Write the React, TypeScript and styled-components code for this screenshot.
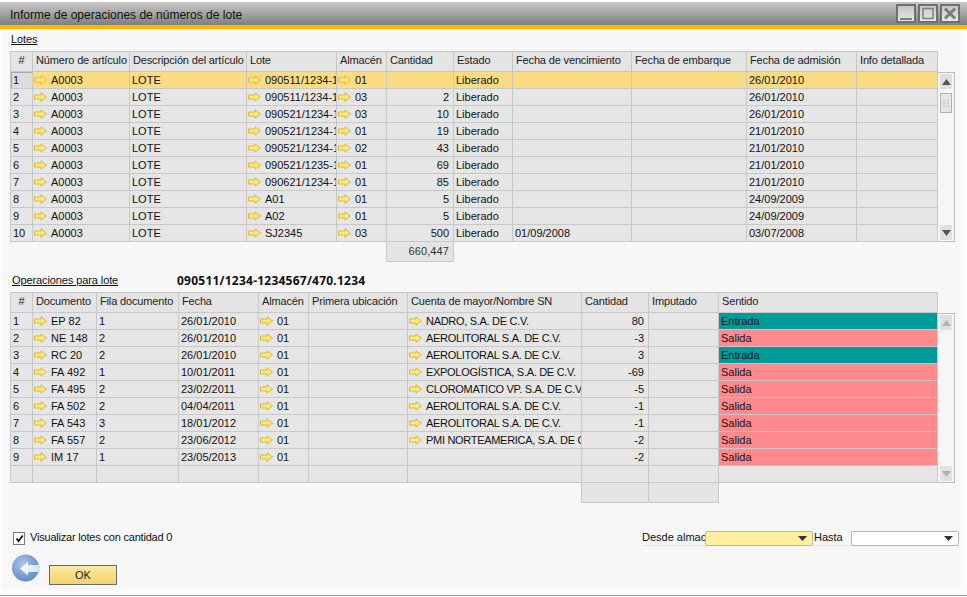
import React from 'react'
import styled, { createGlobalStyle } from 'styled-components'

const GlobalStyle = createGlobalStyle`
  html, body {
    margin: 0;
    padding: 0;
    background: #fbfbfb;
    overflow: hidden;
  }
  * {
    box-sizing: border-box;
  }
`

const Window = styled.div`
  width: 967px;
  height: 597px;
  display: flex;
  flex-direction: column;
  padding-top: 2px;
  font-family: 'Liberation Sans', Arial, sans-serif;
  font-size: 11px;
  color: #111;
  background: #fbfbfb;
`

const TitleBar = styled.div`
  height: 23px;
  flex: none;
  display: flex;
  align-items: center;
  justify-content: space-between;
  padding: 0 7px 0 10px;
  background: linear-gradient(#c9c9c9, #7e7e7e);
  font-size: 12px;
`

const TitleText = styled.span`
  padding-top: 2px;
`

const WindowButtons = styled.div`
  display: flex;
  gap: 2px;
  align-self: flex-start;
  margin-top: 2px;
`

const WindowButton = styled.div`
  width: 20px;
  height: 19px;
  border: 2px solid #707070;
  background: linear-gradient(#c6c6c6, #e8e8e8);
  display: flex;
  align-items: center;
  justify-content: center;
`

const Accent = styled.div`
  height: 4px;
  flex: none;
  background: #fbb800;
`

const Body = styled.div`
  flex: 1;
  margin: 0 6px 5px 2px;
  padding: 0 0 0 8px;
  background: #f7f7f7;
  display: flex;
  flex-direction: column;
`

const BottomEdge = styled.div`
  height: 1px;
  flex: none;
  margin-bottom: 1px;
  background: #9c9c9c;
`

const SectionHead = styled.div<{ $top: number }>`
  display: flex;
  height: 14px;
  margin-top: ${p => p.$top}px;
  margin-bottom: 5px;
  align-items: center;
`

const SectionLabel = styled.span<{ $width?: number; $indent: number }>`
  text-decoration: underline;
  letter-spacing: -0.1px;
  padding-left: ${p => p.$indent}px;
  ${p => (p.$width ? `width: ${p.$width}px;` : '')}
  flex: none;
`

const BatchId = styled.span`
  font-family: 'Noto Sans', 'Liberation Sans', sans-serif;
  font-size: 12px;
  font-weight: 700;
  letter-spacing: 0.23px;
`

const GridWrap = styled.div`
  width: 945px;
`

const HeaderRow = styled.div<{ $cols: string }>`
  display: grid;
  grid-template-columns: ${p => p.$cols};
  width: 928px;
  height: 21px;
  border-top: 1px solid #c8c8c8;
  border-left: 1px solid #c8c8c8;
  background: #e4e4e4;
`

const HeaderCell = styled.div<{ $center?: boolean }>`
  padding: 0 3px;
  line-height: 16px;
  letter-spacing: -0.15px;
  color: #222;
  white-space: nowrap;
  overflow: hidden;
  border-right: 1px solid #c8c8c8;
  border-bottom: 1px solid #c8c8c8;
  text-align: ${p => (p.$center ? 'center' : 'left')};
`

const BodyWrap = styled.div`
  display: flex;
`

const Rows = styled.div`
  width: 928px;
  flex: none;
`

const Row = styled.div<{ $cols: string }>`
  display: grid;
  grid-template-columns: ${p => p.$cols};
  height: 17px;
  border-left: 1px solid #c8c8c8;
`

const Cell = styled.div<{ $right?: boolean; $caps?: boolean; $tone?: 'sel' | 'in' | 'out' | 'rowsel' }>`
  padding: 0 ${p => (p.$right ? 4 : 0)}px 0 2px;
  line-height: 16px;
  ${p => (p.$caps ? 'letter-spacing: -0.3px;' : '')}
  white-space: nowrap;
  overflow: hidden;
  display: flex;
  align-items: center;
  gap: 4px;
  justify-content: ${p => (p.$right ? 'flex-end' : 'flex-start')};
  border-right: 1px solid #c8c8c8;
  border-bottom: 1px solid #c8c8c8;
  background: ${p =>
    p.$tone === 'sel'
      ? '#fcdc82'
      : p.$tone === 'in'
        ? '#009b9b'
        : p.$tone === 'out'
          ? '#ff8a8e'
          : p.$tone === 'rowsel'
            ? '#dcdcdc'
            : '#e6e6e6'};
  ${p => (p.$tone === 'rowsel' ? 'box-shadow: inset 1px 1px #a8a8a8;' : '')}
`

const ScrollBar = styled.div`
  width: 17px;
  flex: none;
  border: 1px solid #bdbdbd;
  border-left: none;
  background: #f6f6f6;
  display: flex;
  flex-direction: column;
  justify-content: space-between;
  padding: 1px 2px 1px 2px;
`

const ScrollTrack = styled.div`
  display: flex;
  flex-direction: column;
  gap: 4px;
`

const ScrollBtn = styled.div<{ $muted?: boolean }>`
  height: 15px;
  background: #e0e0e0;
  display: flex;
  align-items: center;
  justify-content: center;
  color: ${p => (p.$muted ? '#b0b0b0' : '#555')};
`

const ScrollThumb = styled.div`
  height: 20px;
  background: #e6e6e6;
  border: 1px solid #b2b2b2;
  display: flex;
  align-items: center;
  justify-content: center;
`

const TotalRow = styled.div<{ $left: number; $cols: string }>`
  display: grid;
  grid-template-columns: ${p => p.$cols};
  margin-left: ${p => p.$left}px;
  width: fit-content;
  height: 20px;
`

const TotalCell = styled.div`
  background: #e4e4e4;
  border: 1px solid #c8c8c8;
  border-top: none;
  margin-left: -1px;
  padding: 0 4px;
  line-height: 19px;
  text-align: right;
  color: #333;
  letter-spacing: 0.1px;
`

const Filters = styled.div`
  display: flex;
  align-items: flex-start;
  justify-content: space-between;
  height: 15px;
  margin-top: 28px;
  width: 949px;
  padding-left: 3px;
`

const CheckLabel = styled.label`
  display: flex;
  align-items: flex-start;
  gap: 5px;
  line-height: 13px;
  letter-spacing: -0.2px;
`

const CheckBox = styled.span`
  width: 12px;
  height: 13px;
  margin-top: 1px;
  border: 1px solid #7a7a7a;
  background: #fff;
  display: flex;
  align-items: center;
  justify-content: center;
`

const RangeFields = styled.div`
  display: flex;
  align-items: center;
`

const FieldLabel = styled.span<{ $width: number; $indent?: number }>`
  width: ${p => p.$width}px;
  height: 15px;
  padding-left: ${p => p.$indent ?? 0}px;
  line-height: 13px;
  overflow: hidden;
  white-space: nowrap;
  border-bottom: 1px solid #e2e6ee;
  flex: none;
`

const Combo = styled.div<{ $fill: string }>`
  width: 108px;
  height: 15px;
  flex: none;
  background: ${p => p.$fill};
  border: 1px solid #b4b4b4;
  border-radius: 2px;
  display: flex;
  align-items: center;
  justify-content: flex-end;
  padding-right: 2px;
`

const Actions = styled.div`
  display: flex;
  align-items: flex-start;
  gap: 9px;
  margin-top: 8px;
  padding-left: 2px;
`

const OkButton = styled.button`
  width: 68px;
  height: 20px;
  padding: 0;
  margin-top: 11px;
  border: 1px solid #6a6a6a;
  background: linear-gradient(#fbe9a5, #f5d264);
  font: inherit;
  color: #222;
`

const lotCols = '22px 97px 117px 90px 50px 67px 59px 119px 115px 110px 81px'
const opCols = '22px 64px 82px 80px 50px 99px 174px 67px 70px 219px'

const lotHeads = [
  '#',
  'Número de artículo',
  'Descripción del artículo',
  'Lote',
  'Almacén',
  'Cantidad',
  'Estado',
  'Fecha de vencimiento',
  'Fecha de embarque',
  'Fecha de admisión',
  'Info detallada',
]

const opHeads = [
  '#',
  'Documento',
  'Fila documento',
  'Fecha',
  'Almacén',
  'Primera ubicación',
  'Cuenta de mayor/Nombre SN',
  'Cantidad',
  'Imputado',
  'Sentido',
]

const lots = [
  ['090511/1234-1234567/470.1234', '01', '', '', '26/01/2010'],
  ['090511/1234-1234567/470.1235', '03', '2', '', '26/01/2010'],
  ['090521/1234-1234567/470.1236', '03', '10', '', '26/01/2010'],
  ['090521/1234-1234567/470.1237', '01', '19', '', '21/01/2010'],
  ['090521/1234-1234567/470.1238', '02', '43', '', '21/01/2010'],
  ['090521/1235-1234567/470.1239', '01', '69', '', '21/01/2010'],
  ['090621/1234-1234567/470.1240', '01', '85', '', '21/01/2010'],
  ['A01', '01', '5', '', '24/09/2009'],
  ['A02', '01', '5', '', '24/09/2009'],
  ['SJ2345', '03', '500', '01/09/2008', '03/07/2008'],
]

const ops = [
  ['EP 82', '1', '26/01/2010', 'NADRO, S.A. DE C.V.', '80', 'Entrada'],
  ['NE 148', '2', '26/01/2010', 'AEROLITORAL S.A. DE C.V.', '-3', 'Salida'],
  ['RC 20', '2', '26/01/2010', 'AEROLITORAL S.A. DE C.V.', '3', 'Entrada'],
  ['FA 492', '1', '10/01/2011', 'EXPOLOGÍSTICA, S.A. DE C.V.', '-69', 'Salida'],
  ['FA 495', '2', '23/02/2011', 'CLOROMATICO VP. S.A. DE C.V.', '-5', 'Salida'],
  ['FA 502', '2', '04/04/2011', 'AEROLITORAL S.A. DE C.V.', '-1', 'Salida'],
  ['FA 543', '3', '18/01/2012', 'AEROLITORAL S.A. DE C.V.', '-1', 'Salida'],
  ['FA 557', '2', '23/06/2012', 'PMI NORTEAMERICA, S.A. DE C.V.', '-2', 'Salida'],
  ['IM 17', '1', '23/05/2013', '', '-2', 'Salida'],
]

const ArrowIcon = styled.svg`
  flex: none;
  margin-left: -1px;
`

function LinkArrow() {
  return (
    <ArrowIcon width="13" height="10" viewBox="0 0 13 10">
      <path d="M.5 3H7V.8L12.4 5 7 9.2V7H.5Z" fill="#fdea70" stroke="#d9b64a" strokeWidth="1" />
    </ArrowIcon>
  )
}

function Triangle({ down }: { down?: boolean }) {
  return (
    <svg width="9" height="6" viewBox="0 0 9 6">
      <path d={down ? 'M0 0H9L4.5 6Z' : 'M0 6H9L4.5 0Z'} fill="currentColor" />
    </svg>
  )
}

function Scroller({ muted }: { muted?: boolean }) {
  return (
    <ScrollBar>
      <ScrollTrack>
        <ScrollBtn $muted={muted}>
          <Triangle />
        </ScrollBtn>
        {!muted && (
          <ScrollThumb>
            <svg width="6" height="8" viewBox="0 0 6 8">
              <path d="M0 0h2v2H0zM4 0h2v2H4zM0 3h2v2H0zM4 3h2v2H4zM0 6h2v2H0zM4 6h2v2H4z" fill="#cfcfcf" />
            </svg>
          </ScrollThumb>
        )}
      </ScrollTrack>
      <ScrollBtn $muted={muted}>
        <Triangle down />
      </ScrollBtn>
    </ScrollBar>
  )
}

function ComboArrow() {
  return (
    <svg width="9" height="5" viewBox="0 0 9 5" style={{ marginRight: 3 }}>
      <path d="M0 0H9L4.5 5Z" fill="#333" />
    </svg>
  )
}

function BackIcon() {
  return (
    <svg width="28" height="28" viewBox="0 0 28 28">
      <defs>
        <radialGradient id="backDisc" cx="0.4" cy="0.35" r="0.75">
          <stop offset="0" stopColor="#a9c4e8" />
          <stop offset="1" stopColor="#5786c0" />
        </radialGradient>
        <linearGradient id="backArrow" x1="0" y1="0" x2="1" y2="0">
          <stop offset="0" stopColor="#ffffff" />
          <stop offset="1" stopColor="#cfe0f2" />
        </linearGradient>
      </defs>
      <circle cx="13.5" cy="14" r="13.5" fill="url(#backDisc)" />
      <path d="M8 14.5L16 7.5V11H28V18H16V21.5Z" fill="url(#backArrow)" />
    </svg>
  )
}

export default function App() {
  return (
    <Window>
      <GlobalStyle />
      <TitleBar>
        <TitleText>Informe de operaciones de números de lote</TitleText>
        <WindowButtons>
          <WindowButton>
            <svg width="14" height="13" viewBox="0 0 14 13">
              <path d="M1 11h12v2H1z" fill="#7c7c7c" />
            </svg>
          </WindowButton>
          <WindowButton>
            <svg width="14" height="13" viewBox="0 0 14 13">
              <path d="M2 1.5h10v10H2z" fill="none" stroke="#7c7c7c" strokeWidth="1.5" />
            </svg>
          </WindowButton>
          <WindowButton>
            <svg width="14" height="13" viewBox="0 0 14 13">
              <path d="M2 1.5l10 10M12 1.5l-10 10" stroke="#7c7c7c" strokeWidth="3" />
            </svg>
          </WindowButton>
        </WindowButtons>
      </TitleBar>
      <Accent />
      <Body>
        <SectionHead $top={3}>
          <SectionLabel $indent={1}>Lotes</SectionLabel>
        </SectionHead>
        <GridWrap>
          <HeaderRow $cols={lotCols}>
            {lotHeads.map((h, i) => (
              <HeaderCell key={h} $center={i === 0}>
                {h}
              </HeaderCell>
            ))}
          </HeaderRow>
          <BodyWrap>
            <Rows>
              {lots.map((lot, i) => {
                const tone = i === 0 ? 'sel' : undefined
                return (
                  <Row key={i} $cols={lotCols}>
                    <Cell $tone={i === 0 ? 'rowsel' : undefined}>{i + 1}</Cell>
                    <Cell $tone={tone}>
                      <LinkArrow />
                      A0003
                    </Cell>
                    <Cell $tone={tone}>LOTE</Cell>
                    <Cell $tone={tone}>
                      <LinkArrow />
                      {lot[0]}
                    </Cell>
                    <Cell $tone={tone}>
                      <LinkArrow />
                      {lot[1]}
                    </Cell>
                    <Cell $tone={tone} $right>
                      {lot[2]}
                    </Cell>
                    <Cell $tone={tone}>Liberado</Cell>
                    <Cell $tone={tone}>{lot[3]}</Cell>
                    <Cell $tone={tone} />
                    <Cell $tone={tone}>{lot[4]}</Cell>
                    <Cell $tone={tone} />
                  </Row>
                )
              })}
            </Rows>
            <Scroller />
          </BodyWrap>
          <TotalRow $left={377} $cols="67px">
            <TotalCell>660,447</TotalCell>
          </TotalRow>
        </GridWrap>
        <SectionHead $top={11}>
          <SectionLabel $indent={2} $width={167}>
            Operaciones para lote
          </SectionLabel>
          <BatchId>090511/1234-1234567/470.1234</BatchId>
        </SectionHead>
        <GridWrap>
          <HeaderRow $cols={opCols}>
            {opHeads.map((h, i) => (
              <HeaderCell key={h} $center={i === 0}>
                {h}
              </HeaderCell>
            ))}
          </HeaderRow>
          <BodyWrap>
            <Rows>
              {ops.map((op, i) => (
                <Row key={i} $cols={opCols}>
                  <Cell>{i + 1}</Cell>
                  <Cell>
                    <LinkArrow />
                    {op[0]}
                  </Cell>
                  <Cell>{op[1]}</Cell>
                  <Cell>{op[2]}</Cell>
                  <Cell>
                    <LinkArrow />
                    01
                  </Cell>
                  <Cell />
                  <Cell $caps>
                    {op[3] && <LinkArrow />}
                    {op[3]}
                  </Cell>
                  <Cell $right>{op[4]}</Cell>
                  <Cell />
                  <Cell $tone={op[5] === 'Entrada' ? 'in' : 'out'}>{op[5]}</Cell>
                </Row>
              ))}
              <Row $cols={opCols}>
                {opHeads.map(h => (
                  <Cell key={h} />
                ))}
              </Row>
            </Rows>
            <Scroller muted />
          </BodyWrap>
          <TotalRow $left={572} $cols="67px 70px">
            <TotalCell />
            <TotalCell />
          </TotalRow>
        </GridWrap>
        <Filters>
          <CheckLabel>
            <CheckBox>
              <svg width="9" height="9" viewBox="0 0 9 9">
                <path d="M1.5 4.5L3.6 7 7.8 1.5" fill="none" stroke="#111" strokeWidth="1.8" />
              </svg>
            </CheckBox>
            <span>Visualizar lotes con cantidad 0</span>
          </CheckLabel>
          <RangeFields>
            <FieldLabel $width={63}>Desde almacén</FieldLabel>
            <Combo $fill="#ffef9f">
              <ComboArrow />
            </Combo>
            <FieldLabel $width={38} $indent={1}>
              Hasta
            </FieldLabel>
            <Combo $fill="#ffffff">
              <ComboArrow />
            </Combo>
          </RangeFields>
        </Filters>
        <Actions>
          <BackIcon />
          <OkButton>OK</OkButton>
        </Actions>
      </Body>
      <BottomEdge />
    </Window>
  )
}
